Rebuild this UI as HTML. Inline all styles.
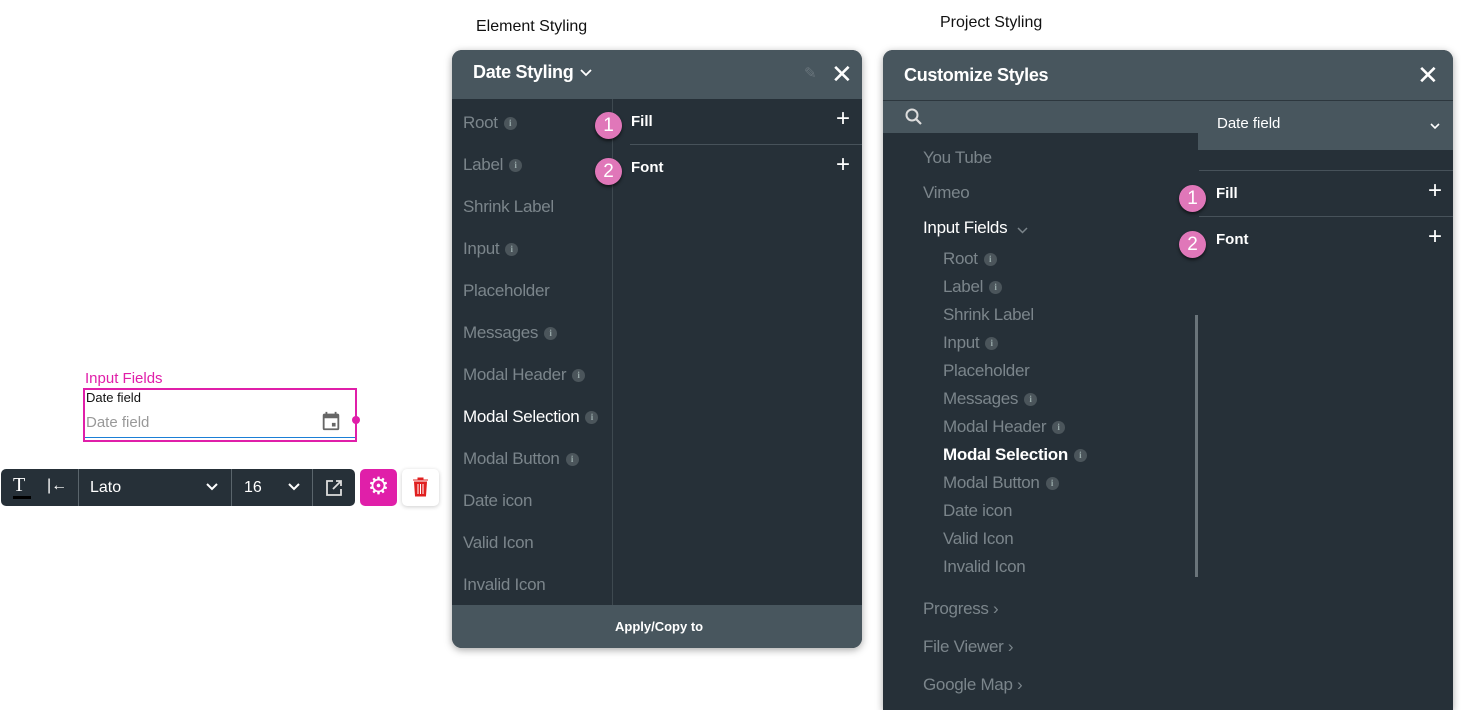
<!DOCTYPE html>
<html><head><style>
*{margin:0;padding:0;box-sizing:border-box}
body{width:1461px;height:707px;background:#fff;position:relative;overflow:hidden;font-family:"Liberation Sans",sans-serif}
.a{position:absolute}
.panel{background:#263038;border-radius:10px;overflow:hidden;box-shadow:0 2px 8px rgba(0,0,0,.35)}
.hdr{background:#48565e}
.it{position:absolute;color:#7b858b;font-size:17px;white-space:nowrap;letter-spacing:-0.3px}
.i{display:inline-block;width:13px;height:13px;border-radius:50%;background:#4b555b;color:#9aa;font-size:9px;text-align:center;line-height:13px;vertical-align:2px;margin-left:6px;font-family:"Liberation Serif",serif;font-weight:bold;letter-spacing:0}
.n{position:absolute;width:27px;height:27px;border-radius:50%;background:#e077b9;color:#fff;font-size:19px;text-align:center;line-height:28px;box-shadow:0 2px 3px rgba(0,0,0,.6)}
.lbl{position:absolute;color:#fff;font-size:15px;font-weight:bold}
.plus{position:absolute;color:#fff;font-size:24px;font-weight:300;line-height:20px}
.line{position:absolute;height:1px;background:#47525a}
</style></head><body>
<div class="a" style="left:476px;top:18px;font-size:16px;color:#111">Element Styling</div>
<div class="a" style="left:940px;top:14px;font-size:16px;color:#111">Project Styling</div>

<div class="a" style="left:85px;top:370px;font-size:15px;color:#e01fa9">Input Fields</div>
<div class="a" style="left:83px;top:388px;width:274px;height:54px;border:2px solid #e01fa9"></div>
<div class="a" style="left:86px;top:390px;font-size:13px;color:#111">Date field</div>
<div class="a" style="left:86px;top:414px;font-size:15px;color:#999">Date field</div>
<div class="a" style="left:85px;top:437px;width:270px;height:1px;background:#1b7fd6"></div>
<svg class="a" style="left:320px;top:410px" width="22" height="22" viewBox="0 0 24 24"><path fill="#666" d="M19 4h-1V2h-2v2H8V2H6v2H5a2 2 0 0 0-2 2v14a2 2 0 0 0 2 2h14a2 2 0 0 0 2-2V6a2 2 0 0 0-2-2zm0 16H5V9h14v11zm-6-6h4v4h-4z"/></svg>
<div class="a" style="left:352px;top:416px;width:8px;height:8px;border-radius:50%;background:#e01fa9"></div>

<div class="a" style="left:1px;top:469px;width:354px;height:37px;background:#263038;border-radius:5px"></div>
<div class="a" style="left:13px;top:474px;color:#fff;font-size:20px;font-family:'Liberation Serif',serif">T</div>
<div class="a" style="left:13px;top:496px;width:18px;height:3px;background:#000"></div>
<div class="a" style="left:47px;top:477px;color:#fff;font-size:16px">|←</div>
<div class="a" style="left:78px;top:469px;width:1px;height:37px;background:#5a656c"></div>
<div class="a" style="left:90px;top:479px;color:#fff;font-size:16px">Lato</div>
<svg class="a" style="left:206px;top:483px" width="12" height="8"><path d="M1 1l5 5 5-5" stroke="#fff" stroke-width="2" fill="none"/></svg>
<div class="a" style="left:231px;top:469px;width:1px;height:37px;background:#5a656c"></div>
<div class="a" style="left:244px;top:479px;color:#fff;font-size:16px">16</div>
<svg class="a" style="left:288px;top:483px" width="12" height="8"><path d="M1 1l5 5 5-5" stroke="#fff" stroke-width="2" fill="none"/></svg>
<div class="a" style="left:312px;top:469px;width:1px;height:37px;background:#5a656c"></div>
<svg class="a" style="left:325px;top:479px" width="18" height="18" viewBox="0 0 18 18"><path d="M8 2H2v14h14v-6M11 2h5v5M16 2l-8 8" stroke="#ddd" stroke-width="1.8" fill="none"/></svg>
<div class="a" style="left:360px;top:469px;width:37px;height:37px;background:#e01fa9;border-radius:5px;color:#fff;font-size:24px;text-align:center;line-height:36px">⚙</div>
<div class="a" style="left:402px;top:469px;width:37px;height:37px;background:#fff;border-radius:5px;box-shadow:0 1px 4px rgba(0,0,0,.2)"></div>
<svg class="a" style="left:412px;top:477px" width="17" height="20" viewBox="0 0 17 20"><path d="M1 3h15M6 3V1h5v2M2.5 5h12l-1 14h-10z" fill="#e02020" stroke="#e02020"/><path d="M6 7v10M8.5 7v10M11 7v10" stroke="#fff" stroke-width="1"/></svg>

<div class="a panel" style="left:452px;top:50px;width:410px;height:598px">
 <div class="hdr a" style="left:0;top:0;width:410px;height:49px"></div>
 <div class="a" style="left:21px;top:12px;color:#fff;font-size:18px;font-weight:bold;letter-spacing:-0.3px">Date Styling</div>
 <svg class="a" style="left:128px;top:19px" width="12" height="8"><path d="M1 1l5 5 5-5" stroke="#fff" stroke-width="1.8" fill="none"/></svg>
 <div class="a" style="left:352px;top:14px;color:#69757c;font-size:15px">✎</div>
 <div class="a" style="left:379px;top:9px;color:#fff;font-size:26px">✕</div>
 <div class="a" style="left:160px;top:49px;width:1px;height:506px;background:#3e4950"></div>
 <div class="hdr a" style="left:0;top:555px;width:410px;height:43px"></div>
 <div class="a" style="left:163px;top:569px;color:#fff;font-size:13px;font-weight:bold">Apply/Copy to</div>
 <div class="line" style="left:178px;top:94px;width:232px"></div>
</div>
<div class="it" style="left:463px;top:113px">Root<span class="i">i</span></div>
<div class="it" style="left:463px;top:155px">Label<span class="i">i</span></div>
<div class="it" style="left:463px;top:197px">Shrink Label</div>
<div class="it" style="left:463px;top:239px">Input<span class="i">i</span></div>
<div class="it" style="left:463px;top:281px">Placeholder</div>
<div class="it" style="left:463px;top:323px">Messages<span class="i">i</span></div>
<div class="it" style="left:463px;top:365px">Modal Header<span class="i">i</span></div>
<div class="it" style="left:463px;top:407px;color:#fff">Modal Selection<span class="i">i</span></div>
<div class="it" style="left:463px;top:449px">Modal Button<span class="i">i</span></div>
<div class="it" style="left:463px;top:491px">Date icon</div>
<div class="it" style="left:463px;top:533px">Valid Icon</div>
<div class="it" style="left:463px;top:575px">Invalid Icon</div>
<div class="n" style="left:595px;top:112px">1</div>
<div class="n" style="left:595px;top:158px">2</div>
<div class="lbl" style="left:631px;top:113px">Fill</div>
<div class="lbl" style="left:631px;top:159px">Font</div>
<div class="plus" style="left:836px;top:109px">+</div>
<div class="plus" style="left:836px;top:155px">+</div>

<div class="a panel" style="left:883px;top:50px;width:570px;height:660px;border-radius:10px 10px 0 0">
 <div class="hdr a" style="left:0;top:0;width:570px;height:50px"></div>
 <div class="a" style="left:0;top:50px;width:570px;height:1px;background:#2d373e"></div>
 <div class="a" style="left:21px;top:15px;color:#fff;font-size:18px;font-weight:bold;letter-spacing:-0.3px">Customize Styles</div>
 <div class="a" style="left:534px;top:10px;color:#fff;font-size:26px">✕</div>
 <div class="hdr a" style="left:0;top:51px;width:315px;height:32px"></div>
 <svg class="a" style="left:22px;top:58px" width="18" height="18" viewBox="0 0 18 18"><circle cx="7" cy="7" r="5.5" stroke="#ddd" stroke-width="2" fill="none"/><path d="M11 11l5 5" stroke="#ddd" stroke-width="2.2"/></svg>
 <div class="hdr a" style="left:315px;top:51px;width:255px;height:49px"></div>
 <div class="a" style="left:334px;top:65px;color:#fff;font-size:15px">Date field</div>
 <svg class="a" style="left:547px;top:73px" width="10" height="7"><path d="M1 1l4 4 4-4" stroke="#fff" stroke-width="1.6" fill="none"/></svg>
 <div class="line" style="left:316px;top:120px;width:254px"></div>
 <div class="line" style="left:316px;top:166px;width:254px"></div>
 <div class="a" style="left:312px;top:265px;width:3px;height:262px;background:#6a747a"></div>
</div>
<div class="it" style="left:923px;top:148px">You Tube</div>
<div class="it" style="left:923px;top:183px">Vimeo</div>
<div class="it" style="left:923px;top:218px;color:#fff">Input Fields</div>
<svg class="a" style="left:1017px;top:227px" width="11" height="7"><path d="M1 1l4.5 4.5 4.5-4.5" stroke="#7b858b" stroke-width="1.5" fill="none"/></svg>
<div class="it" style="left:943px;top:249px">Root<span class="i">i</span></div>
<div class="it" style="left:943px;top:277px">Label<span class="i">i</span></div>
<div class="it" style="left:943px;top:305px">Shrink Label</div>
<div class="it" style="left:943px;top:333px">Input<span class="i">i</span></div>
<div class="it" style="left:943px;top:361px">Placeholder</div>
<div class="it" style="left:943px;top:389px">Messages<span class="i">i</span></div>
<div class="it" style="left:943px;top:417px">Modal Header<span class="i">i</span></div>
<div class="it" style="left:943px;top:445px;color:#fff;font-weight:bold">Modal Selection<span class="i">i</span></div>
<div class="it" style="left:943px;top:473px">Modal Button<span class="i">i</span></div>
<div class="it" style="left:943px;top:501px">Date icon</div>
<div class="it" style="left:943px;top:529px">Valid Icon</div>
<div class="it" style="left:943px;top:557px">Invalid Icon</div>
<div class="it" style="left:923px;top:599px">Progress ›</div>
<div class="it" style="left:923px;top:637px">File Viewer ›</div>
<div class="it" style="left:923px;top:675px">Google Map ›</div>
<div class="n" style="left:1179px;top:185px">1</div>
<div class="n" style="left:1179px;top:231px">2</div>
<div class="lbl" style="left:1216px;top:185px">Fill</div>
<div class="lbl" style="left:1216px;top:231px">Font</div>
<div class="plus" style="left:1428px;top:181px">+</div>
<div class="plus" style="left:1428px;top:227px">+</div>
</body></html>
